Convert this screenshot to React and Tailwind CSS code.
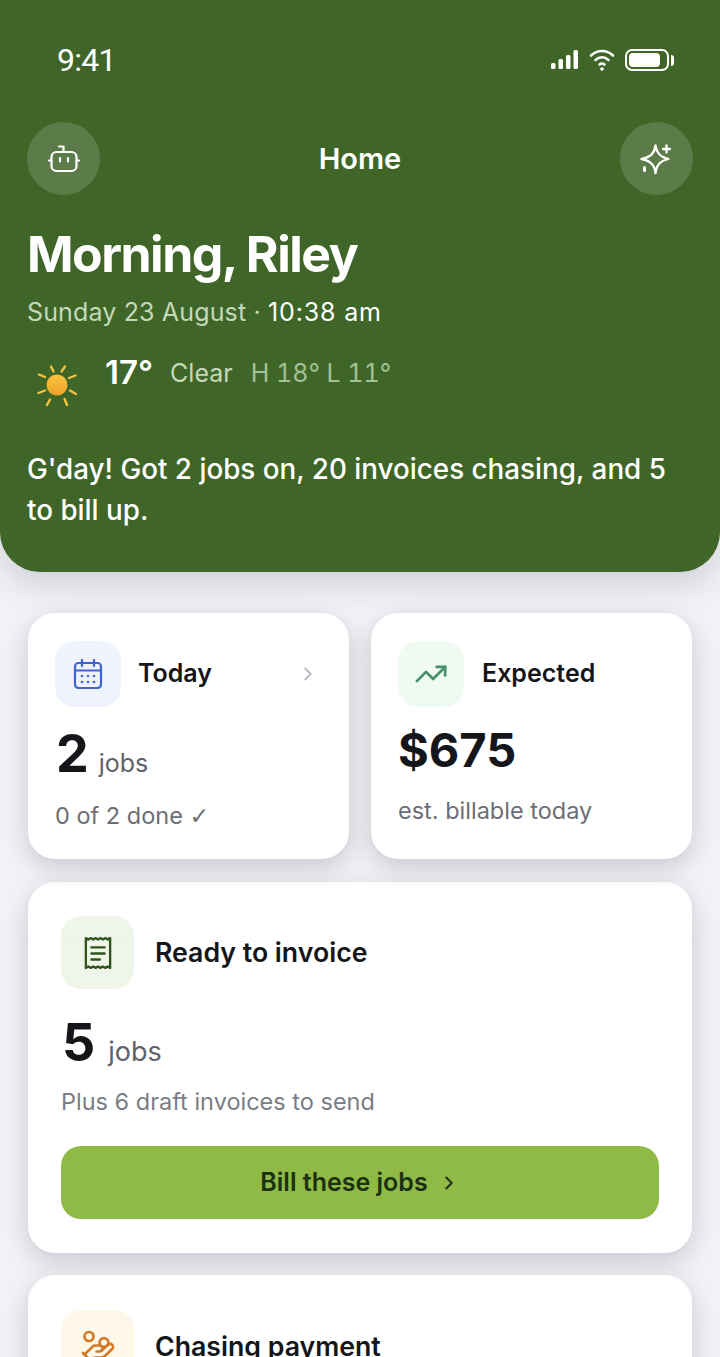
import React from "react";
import { ChevronRight, TrendingUp, HandCoins } from "lucide-react";

const Sun = () => (
  <svg width="50" height="50" viewBox="0 0 50 50" fill="none">
    <defs>
      <linearGradient id="sunFill" x1="0" y1="0" x2="0" y2="1">
        <stop offset="0" stopColor="#f9c23c" />
        <stop offset="1" stopColor="#eda32c" />
      </linearGradient>
    </defs>
    <circle cx="25" cy="25" r="10.5" fill="url(#sunFill)" />
    <g stroke="#f5c344" strokeWidth="2.4" strokeLinecap="round">
      <path d="M19 6.5l2.5 5" />
      <path d="M33 6.5l-3.5 5" />
      <path d="M7 14.5l6 2.5" />
      <path d="M43.5 15.5l-6.5 2.5" />
      <path d="M6.5 33l6.5-2.5" />
      <path d="M44 34l-6-3.5" />
      <path d="M15 45l3-5.5" />
      <path d="M35 45l-2.5-6" />
    </g>
  </svg>
);

const SignalIcon = () => (
  <svg width="28" height="20" viewBox="0 0 28 20" fill="white">
    <rect x="0" y="13" width="4.500" height="6" rx="1.5" />
    <rect x="7.500" y="9" width="4.500" height="10" rx="1.5" />
    <rect x="15" y="5" width="4.500" height="14" rx="1.5" />
    <rect x="22.500" y="0" width="4.500" height="19" rx="1.5" />
  </svg>
);

const WifiIcon = () => (
  <svg width="26" height="24" viewBox="0 0 26 24" fill="none" stroke="white" strokeWidth="2.6" strokeLinecap="round">
    <path d="M2 7.5c6.5-6 15.5-6 22 0" />
    <path d="M6.5 12c4-3.5 9-3.5 13 0" />
    <path d="M10.5 16.5c1.5-1.2 3.5-1.2 5 0" />
    <circle cx="13" cy="21" r="1.8" fill="white" stroke="none" />
  </svg>
);

const BatteryIcon = () => (
  <div className="flex items-center gap-[2px]">
    <div className="flex h-[22px] w-[44px] items-center rounded-[7px] border-2 border-white p-[2px]">
      <div className="h-full w-[31px] rounded-[4px] bg-white" />
    </div>
    <div className="h-[11px] w-[3px] rounded-r-full bg-white" />
  </div>
);

const BotIcon = () => (
  <svg width="32" height="32" viewBox="0 0 32 32" fill="none" stroke="white" strokeWidth="2.2" strokeLinecap="round" strokeLinejoin="round">
    <rect x="3.5" y="9" width="25" height="19" rx="5" />
    <path d="M15.500 9V3.500H11" />
    <path d="M1 17.500h2.500M28.500 17.500H31" />
    <path d="M12 15v3.500M20 15v3.500" />
  </svg>
);

const SparkleIcon = () => (
  <svg width="34" height="32" viewBox="0 0 34 32" fill="none" stroke="white" strokeWidth="2.3" strokeLinecap="round" strokeLinejoin="round">
    <path d="M16.500 2.500c1 7.500 4.500 11.500 13 13.500-8.500 2-12 6-13 14-1-8-4.500-12-14-14 9.500-2 13-6 14-13.500z" />
    <path d="M27.500 2.500v7M24 6h7" />
    <path d="M5.500 24.500v3" strokeWidth="3" />
  </svg>
);

const CalendarDotsIcon = () => (
  <svg width="30" height="32" viewBox="0 0 30 32" fill="none" stroke="#3f63d2" strokeWidth="2.2" strokeLinecap="round" strokeLinejoin="round">
    <rect x="2" y="5" width="26" height="25" rx="3.5" />
    <path d="M2 12.500h26M9 2v6M21 2v6" />
    <g fill="#3f63d2" stroke="none">
      <circle cx="9" cy="18" r="1.300" />
      <circle cx="15" cy="18" r="1.300" />
      <circle cx="21" cy="18" r="1.300" />
      <circle cx="9" cy="24" r="1.300" />
      <circle cx="15" cy="24" r="1.300" />
      <circle cx="21" cy="24" r="1.300" />
    </g>
  </svg>
);

const ReceiptIcon = () => (
  <svg width="28" height="36" viewBox="0 0 30 36" fill="none" stroke="#2f551c" strokeWidth="2.5" strokeLinejoin="round" strokeLinecap="round">
    <path d="M2 2l2.600 1.500L7.200 2l2.600 1.500L12.400 2 15 3.500 17.600 2l2.600 1.500L22.800 2l2.600 1.500L28 2v32l-2.600-1.500-2.600 1.500-2.600-1.500-2.600 1.500-2.600-1.500-2.600 1.500-2.600-1.500-2.600 1.500-2.600-1.500L2 34z" />
    <path d="M8 12h14M8 18.500h14M8 25h9" />
  </svg>
);

const IconTile = ({ size, bg, children }) => (
  <div className={`flex shrink-0 items-center justify-center rounded-[20px] ${size} ${bg}`}>{children}</div>
);

export default function App() {
  return (
    <div className="relative h-[1357px] w-[720px] overflow-hidden bg-[#f1f2f6] font-['Inter',sans-serif]">
      <header className="h-[572px] rounded-b-[40px] bg-[#3f6628] px-[27px] shadow-[0_12px_30px_rgba(30,40,60,0.16)]">
        <div className="flex h-[122px] items-start justify-between pl-[30px] pr-[19px] pt-[41px]">
          <span className="font-['Roboto',sans-serif] text-[32px] leading-[38px] tracking-[-0.7px] text-white">9:41</span>
          <div className="flex items-center gap-[10px] pt-[7px]">
            <SignalIcon />
            <WifiIcon />
            <BatteryIcon />
          </div>
        </div>

        <div className="flex items-center justify-between">
          <button className="flex h-[73px] w-[73px] items-center justify-center rounded-full bg-white/15">
            <BotIcon />
          </button>
          <h2 className="text-[29px] font-semibold text-white">Home</h2>
          <button className="flex h-[73px] w-[73px] items-center justify-center rounded-full bg-white/15">
            <SparkleIcon />
          </button>
        </div>

        <h1 className="mt-[26px] text-[50px] font-bold leading-[66px] tracking-[-1.5px] text-white">Morning, Riley</h1>
        <p className="mt-[9px] text-[25px] leading-[32px] tracking-[0.15px] text-[#c5d8b9]">
          Sunday 23 August · <span className="font-normal tracking-[0.85px] text-white">10:38 am</span>
        </p>

        <div className="mt-[25px] flex items-start">
          <div className="ml-[5px] mt-[7px]"><Sun /></div>
          <span className="ml-[23px] pt-[1px] text-[33px] font-semibold leading-[36px] text-white">17°</span>
          <span className="ml-[17px] pt-[2px] text-[25px] leading-[36px] text-[#c5d8b9]">Clear</span>
          <span className="ml-[18px] pt-[2px] text-[25px] leading-[36px] tabular-nums text-[#a3c096]">H 18° L 11°</span>
        </div>

        <p className="mt-[39px] text-[27.8px] font-medium leading-[41px] text-white">
          G'day! Got 2 jobs on, 20 invoices chasing, and 5 to bill up.
        </p>
      </header>

      <main className="px-[28px] pt-[41px]">
        <div className="grid grid-cols-2 gap-[22px]">
          <section className="h-[246px] rounded-[27px] bg-white p-[27px] pt-[28px] shadow-[0_8px_24px_rgba(30,40,60,0.2)]">
            <div className="flex items-center">
              <IconTile size="h-[66px] w-[66px]" bg="bg-[#eff3fe]">
                <CalendarDotsIcon />
              </IconTile>
              <span className="ml-[17px] text-[25px] font-semibold text-[#14161a]">Today</span>
              <ChevronRight size={22} className="ml-auto mr-[3px] text-[#b8bbc2]" />
            </div>
            <div className="mt-[14px] flex items-baseline">
              <span className="ml-[1px] text-[52px] font-bold leading-[66px] text-[#14161a]">2</span>
              <span className="ml-[10px] text-[25px] text-[#5f6269]">jobs</span>
            </div>
            <p className="mt-[13px] text-[23.5px] leading-[32px] text-[#6b6e75]">
              0 of 2 done <span className="font-['DejaVu_Sans',sans-serif]">✓</span>
            </p>
          </section>

          <section className="h-[246px] rounded-[27px] bg-white p-[27px] pt-[28px] shadow-[0_8px_24px_rgba(30,40,60,0.2)]">
            <div className="flex items-center">
              <IconTile size="h-[66px] w-[66px]" bg="bg-[#eefaf2]">
                <TrendingUp size={34} strokeWidth={1.9} className="text-[#46906a]" />
              </IconTile>
              <span className="ml-[18px] text-[25px] font-semibold text-[#14161a]">Expected</span>
            </div>
            <p className="mt-[9px] text-[47px] font-bold leading-[68px] text-[#14161a]">$675</p>
            <p className="mt-[11px] text-[23.5px] leading-[32px] text-[#6b6e75]">est. billable today</p>
          </section>
        </div>

        <section className="mt-[23px] h-[371px] rounded-[27px] bg-white px-[33px] pt-[34px] shadow-[0_8px_24px_rgba(30,40,60,0.2)]">
          <div className="flex items-center">
            <IconTile size="h-[73px] w-[73px]" bg="bg-[#eff5e8]">
              <ReceiptIcon />
            </IconTile>
            <span className="ml-[21px] text-[26.7px] font-semibold text-[#14161a]">Ready to invoice</span>
          </div>
          <div className="mt-[20px] flex items-baseline">
            <span className="ml-[1px] text-[52px] font-bold leading-[68px] text-[#14161a]">5</span>
            <span className="ml-[13px] text-[27px] text-[#5f6269]">jobs</span>
          </div>
          <p className="mt-[9px] text-[23.5px] leading-[32px] text-[#7a7d84]">Plus 6 draft invoices to send</p>
          <button className="mt-[28px] flex h-[73px] w-full items-center justify-center gap-[10px] rounded-[20px] bg-[#8fba45] text-[25px] font-semibold text-[#1b3112]">
            Bill these jobs
            <ChevronRight size={22} strokeWidth={2.2} />
          </button>
        </section>

        <section className="mt-[22px] rounded-[27px] bg-white px-[33px] pt-[35px] pb-[30px] shadow-[0_8px_24px_rgba(30,40,60,0.2)]">
          <div className="flex items-center">
            <IconTile size="h-[73px] w-[73px]" bg="bg-[#fdf8e8]">
              <HandCoins size={36} strokeWidth={1.8} className="text-[#d27a2a]" />
            </IconTile>
            <span className="ml-[21px] text-[26.7px] font-semibold text-[#14161a]">Chasing payment</span>
          </div>
        </section>
      </main>

      <div className="absolute left-0 right-0 top-[941px] h-px bg-black/[0.025]" />
    </div>
  );
}
